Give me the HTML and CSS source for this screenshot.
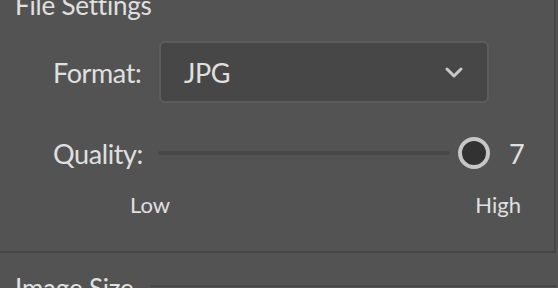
FILE: index.html
```html
<!DOCTYPE html>
<html>
<head>
<meta charset="utf-8">
<link rel="stylesheet" href="styles.css">
</head>
<body>
<div class="panel">
  <section class="group">
    <h2 class="legend">File Settings</h2>
    <div class="row format-row">
      <span class="label">Format:</span>
      <div class="select">
        <span class="select-value">JPG</span>
        <svg class="chevron" width="18" height="11" viewBox="0 0 18 11"><path d="M2 2 L9 9 L16 2" fill="none" stroke="#c9c9c9" stroke-width="3" stroke-linecap="round" stroke-linejoin="round"/></svg>
      </div>
    </div>
    <div class="row quality-row">
      <span class="label">Quality:</span>
      <div class="slider">
        <div class="track"></div>
        <div class="thumb"></div>
      </div>
      <span class="value">7</span>
    </div>
    <div class="scale">
      <span>Low</span>
      <span>High</span>
    </div>
  </section>
  <section class="group next">
    <div class="legend-row">
      <h2 class="legend">Image Size</h2>
      <div class="legend-line"></div>
    </div>
  </section>
</div>
</body>
</html>
```

FILE: styles.css
```css
html, body {
  margin: 0;
  padding: 0;
  background: #535353;
}
body {
  font-family: Lato, "Open Sans", sans-serif;
  color: #e0e0e0;
}
.panel {
  width: 558px;
  height: 288px;
  overflow: hidden;
}
.group {
  display: flow-root;
  box-sizing: border-box;
  width: 556px;
  height: 253px;
  border-right: 2px solid #464646;
  border-bottom: 2px solid #464646;
  padding-left: 15px;
}
.legend {
  margin: -8px 0 0 0;
  font-size: 26px;
  line-height: 26px;
  font-weight: 400;
  letter-spacing: -0.2px;
}
.row {
  display: flex;
  align-items: center;
  padding-left: 38px;
}
.label {
  font-size: 27px;
  letter-spacing: -0.4px;
  width: 106px;
  flex: none;
}
.format-row {
  margin-top: 23px;
  height: 62px;
}
.select {
  box-sizing: border-box;
  width: 330px;
  height: 62px;
  background: #474747;
  border: 2px solid #5c5c5c;
  border-radius: 6px;
  display: flex;
  align-items: center;
  justify-content: space-between;
  padding: 0 24px 0 23px;
}
.select-value {
  font-size: 27px;
  letter-spacing: -0.4px;
}
.quality-row {
  margin-top: 34px;
  height: 32px;
}
.quality-row .label {
  width: 105px;
}
.slider {
  position: relative;
  width: 332px;
  height: 32px;
  display: flex;
  align-items: center;
}
.track {
  width: 292px;
  height: 4px;
  border-radius: 2px;
  background: #484848;
}
.thumb {
  position: absolute;
  left: 300px;
  top: 0;
  box-sizing: border-box;
  width: 32px;
  height: 32px;
  border-radius: 50%;
  background: #323232;
  border: 4px solid #c6c6c6;
}
.value {
  font-size: 27px;
  margin-left: 19px;
}
.scale {
  display: flex;
  justify-content: space-between;
  margin-top: 25px;
  padding: 0 33px 0 115px;
  font-size: 22px;
  line-height: 22px;
}
.group.next {
  border: none;
  height: auto;
  margin-top: 22px;
}
.legend-row {
  display: flex;
  align-items: flex-start;
}
.legend-row .legend {
  margin: 0;
}
.legend-line {
  flex: 1;
  height: 2px;
  background: #464646;
  margin: 10px 0 0 17px;
}
```
